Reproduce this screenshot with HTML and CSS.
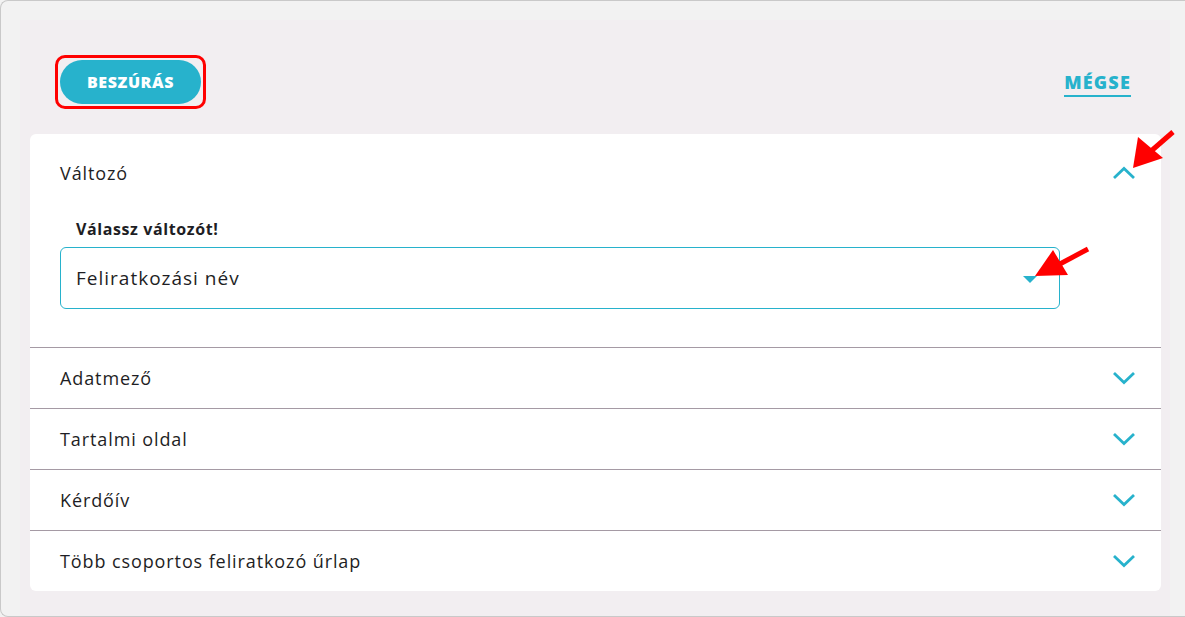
FILE: index.html
```html
<!DOCTYPE html>
<html lang="hu">

<head>
    <meta charset="UTF-8">
    <meta name="viewport" content="width=device-width, initial-scale=1.0">
    <title>Beszúrás</title>
    <link rel="stylesheet" href="styles.css">
</head>

<body>
    <div class="frame">
        <div class="panel">
            <div class="toolbar">
                <span class="highlight">
                    <button class="insert-btn" type="button">BESZÚRÁS</button>
                </span>
                <a class="cancel-link" href="#">MÉGSE</a>
            </div>

            <div class="accordion">
                <div class="acc-item open">
                    <div class="acc-header">
                        <span>Változó</span>
                        <svg class="chevron" width="24" height="14" viewBox="0 0 24 14">
                            <polyline points="2,12 12,2.5 22,12" fill="none" stroke="#27b2cc" stroke-width="2.8" />
                        </svg>
                    </div>
                    <div class="acc-body">
                        <label class="field-label" for="varSelect">Válassz változót!</label>
                        <div class="select-box" id="varSelect">
                            <span>Feliratkozási név</span>
                            <span class="caret"></span>
                        </div>
                    </div>
                </div>
                <div class="acc-item">
                    <div class="acc-header">
                        <span>Adatmező</span>
                        <svg class="chevron" width="24" height="14" viewBox="0 0 24 14">
                            <polyline points="2,2 12,11.5 22,2" fill="none" stroke="#27b2cc" stroke-width="2.8" />
                        </svg>
                    </div>
                </div>
                <div class="acc-item">
                    <div class="acc-header">
                        <span>Tartalmi oldal</span>
                        <svg class="chevron" width="24" height="14" viewBox="0 0 24 14">
                            <polyline points="2,2 12,11.5 22,2" fill="none" stroke="#27b2cc" stroke-width="2.8" />
                        </svg>
                    </div>
                </div>
                <div class="acc-item">
                    <div class="acc-header">
                        <span>Kérdőív</span>
                        <svg class="chevron" width="24" height="14" viewBox="0 0 24 14">
                            <polyline points="2,2 12,11.5 22,2" fill="none" stroke="#27b2cc" stroke-width="2.8" />
                        </svg>
                    </div>
                </div>
                <div class="acc-item">
                    <div class="acc-header">
                        <span>Több csoportos feliratkozó űrlap</span>
                        <svg class="chevron" width="24" height="14" viewBox="0 0 24 14">
                            <polyline points="2,2 12,11.5 22,2" fill="none" stroke="#27b2cc" stroke-width="2.8" />
                        </svg>
                    </div>
                </div>
            </div>
        </div>
    </div>

    <!-- annotation arrows -->
    <svg class="annotations" width="1185" height="617" viewBox="0 0 1185 617">
        <line x1="1173" y1="132" x2="1150" y2="152" stroke="#ff0000" stroke-width="5" />
        <polygon points="1133,168 1138,137 1163,158" fill="#ff0000" />
        <line x1="1088" y1="249" x2="1058" y2="265" stroke="#ff0000" stroke-width="5" />
        <polygon points="1035,276 1053,250 1068,275" fill="#ff0000" />
    </svg>
</body>

</html>
```

FILE: styles.css
```css
* {
    box-sizing: border-box;
}

body {
    margin: 0;
    font-family: "Open Sans", "Noto Sans", sans-serif;
    color: #1e1e24;
    background-color: #f2f2f2;
    overflow: hidden;
}

.frame {
    height: 617px;
    border: 1px solid #c9c9c9;
    border-right: none;
    border-radius: 8px 0 0 8px;
    background-color: #f2f2f2;
    padding: 19px 15px 0 19px;
}

.panel {
    background-color: #f2eef1;
    height: 100%;
    padding: 0 9px 0 10px;
}

.toolbar {
    height: 114px;
    display: flex;
    align-items: center;
    justify-content: space-between;
    padding: 10px 30px 0 25px;
}

.highlight {
    display: inline-flex;
    border: 3px solid #ff0000;
    border-radius: 10px;
    padding: 2px;
}

.insert-btn {
    width: 141px;
    height: 44px;
    border: none;
    border-radius: 22px;
    background-color: #27b2cc;
    color: #fff;
    font-family: inherit;
    font-size: 16px;
    font-weight: 800;
    letter-spacing: 0.6px;
    cursor: pointer;
}

.cancel-link {
    color: #27b2cc;
    font-size: 18px;
    font-weight: 800;
    letter-spacing: 1.2px;
    text-decoration: none;
    border-bottom: 2px solid #27b2cc;
    padding-bottom: 1px;
    margin-top: 2px;
}

.accordion {
    background-color: #fff;
    border-radius: 6px;
}

.acc-item {
    border-top: 1px solid #a59aa4;
}

.acc-item:first-child {
    border-top: none;
}

.acc-header {
    height: 60px;
    display: flex;
    align-items: center;
    justify-content: space-between;
    padding: 0 25px 0 30px;
    font-size: 18px;
    letter-spacing: 0.9px;
}

.open .acc-header {
    height: 78px;
}

.acc-body {
    padding: 6px 101px 38px 30px;
}

.field-label {
    display: block;
    font-size: 16px;
    font-weight: 700;
    letter-spacing: 0.6px;
    margin: 0 0 7px 16px;
}

.select-box {
    height: 62px;
    border: 1px solid #27b2cc;
    border-radius: 6px;
    display: flex;
    align-items: center;
    justify-content: space-between;
    padding: 0 22px 0 15px;
    font-size: 19px;
    letter-spacing: 1px;
}

.caret {
    width: 0;
    height: 0;
    border-left: 7px solid transparent;
    border-right: 7px solid transparent;
    border-top: 7px solid #27b2cc;
    margin-top: 3px;
}

.annotations {
    position: absolute;
    top: 0;
    left: 0;
    pointer-events: none;
}
```
